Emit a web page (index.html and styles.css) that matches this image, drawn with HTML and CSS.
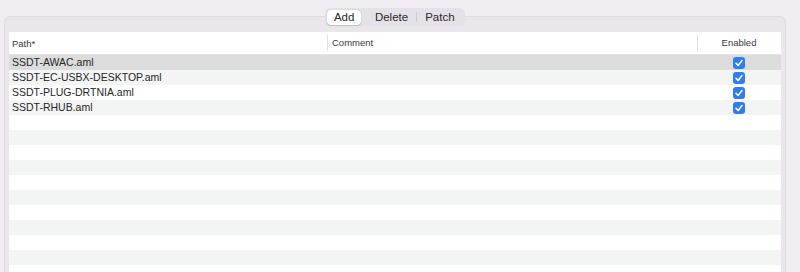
FILE: index.html
```html
<!DOCTYPE html>
<html>
<head>
<meta charset="utf-8">
<link rel="stylesheet" href="styles.css">
</head>
<body>
<div class="page">
  <div class="tabs-bar">
    <div class="segmented">
      <span class="seg active">Add</span>
      <span class="seg">Delete</span>
      <span class="sep"></span>
      <span class="seg">Patch</span>
    </div>
  </div>
  <div class="group">
    <div class="table">
      <div class="head">
        <div class="c-path">Path*</div>
        <div class="c-comment">Comment</div>
        <div class="c-enabled">Enabled</div>
      </div>
      <div class="row selected"><div class="c-path">SSDT-AWAC.aml</div><div class="c-comment"></div><div class="c-enabled"><span class="check"><svg viewBox="0 0 12 12" width="12" height="12"><path d="M3 6.3 L5.1 8.4 L9 3.6" fill="none" stroke="#fff" stroke-width="1.6" stroke-linecap="round" stroke-linejoin="round"/></svg></span></div></div>
      <div class="row"><div class="c-path">SSDT-EC-USBX-DESKTOP.aml</div><div class="c-comment"></div><div class="c-enabled"><span class="check"><svg viewBox="0 0 12 12" width="12" height="12"><path d="M3 6.3 L5.1 8.4 L9 3.6" fill="none" stroke="#fff" stroke-width="1.6" stroke-linecap="round" stroke-linejoin="round"/></svg></span></div></div>
      <div class="row"><div class="c-path">SSDT-PLUG-DRTNIA.aml</div><div class="c-comment"></div><div class="c-enabled"><span class="check"><svg viewBox="0 0 12 12" width="12" height="12"><path d="M3 6.3 L5.1 8.4 L9 3.6" fill="none" stroke="#fff" stroke-width="1.6" stroke-linecap="round" stroke-linejoin="round"/></svg></span></div></div>
      <div class="row"><div class="c-path">SSDT-RHUB.aml</div><div class="c-comment"></div><div class="c-enabled"><span class="check"><svg viewBox="0 0 12 12" width="12" height="12"><path d="M3 6.3 L5.1 8.4 L9 3.6" fill="none" stroke="#fff" stroke-width="1.6" stroke-linecap="round" stroke-linejoin="round"/></svg></span></div></div>
      <div class="row"></div>
      <div class="row"></div>
      <div class="row"></div>
      <div class="row"></div>
      <div class="row"></div>
      <div class="row"></div>
      <div class="row"></div>
      <div class="row"></div>
      <div class="row"></div>
      <div class="row"></div>
      <div class="row"></div>
      <div class="row"></div>
      <div class="row"></div>
    </div>
  </div>
</div>
</body>
</html>
```

FILE: styles.css
```css
* { box-sizing: border-box; }
html, body { margin: 0; padding: 0; }
body {
  width: 800px;
  height: 272px;
  overflow: hidden;
  background: #f1edf2;
  font-family: "Liberation Sans", Arial, sans-serif;
  color: #262626;
}
.page { display: flex; flex-direction: column; height: 272px; overflow: hidden; }
.tabs-bar {
  height: 16px;
  position: relative;
  z-index: 2;
  display: flex;
  justify-content: center;
  padding-right: 10px;
}
.segmented {
  margin-top: 8px;
  height: 18px;
  display: flex;
  align-items: center;
  background: #e6e1e8;
  border-radius: 5px;
  padding: 0 2px;
  font-size: 11.5px;
  color: #2a2a2a;
}
.seg {
  height: 15px;
  line-height: 15px;
  padding: 0 8px;
  border-radius: 4px;
}
.seg.active {
  background: #ffffff;
  box-shadow: 0 0 1px rgba(0,0,0,0.35), 0 1px 1px rgba(0,0,0,0.12);
  padding: 0 6.5px;
  margin-right: 6px;
}
.sep { width: 1px; height: 10px; background: #cfcad1; }
.group {
  margin: 0 14px 0 4px;
  background: #ebe6ec;
  border: 1px solid #e0dbe1;
  border-radius: 6px;
  padding: 15px 4px 0 4px;
  height: 270px;
  flex: none;
}
.table { background: #fff; }
.head {
  display: flex;
  height: 23px;
  align-items: center;
  font-size: 9.5px;
  color: #3a3a3a;
  background: #fff;
  border-bottom: 1px solid #e6e6e6;
}
.head .c-comment, .head .c-enabled { border-left: 1px solid #e2e2e2; height: 16px; line-height: 16px; }
.head .c-path { padding-left: 3px; }
.c-path { width: 318px; padding-left: 3px; }
.c-comment { width: 370px; padding-left: 4px; }
.c-enabled { flex: 1; text-align: center; padding-right: 1px; }
.row {
  display: flex;
  height: 15px;
  align-items: center;
  font-size: 10.5px;
  line-height: 15px;
}
.row:nth-child(odd) { background: #f3f4f4; }
.row:nth-child(even) { background: #ffffff; }
.row.selected { background: #dcdcdc; }
.check {
  display: inline-flex;
  width: 12px;
  height: 12px;
  border-radius: 3px;
  background: #2d7df6;
  vertical-align: middle;
  margin-top: -1px;
}
.check svg { display: block; }
```
